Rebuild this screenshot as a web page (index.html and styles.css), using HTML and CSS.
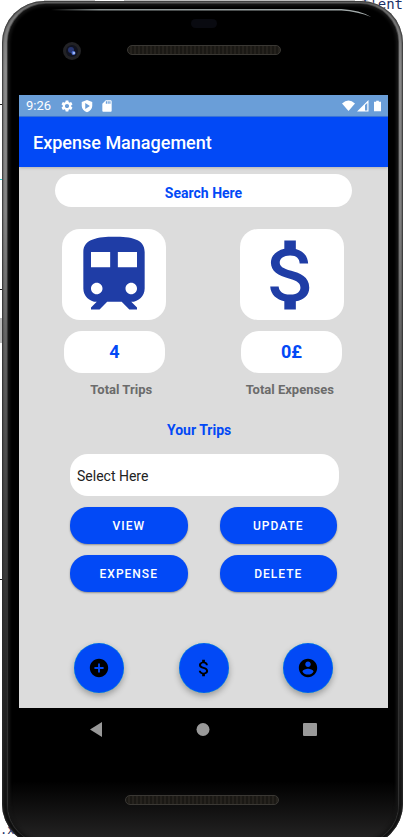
FILE: index.html
```html
<!DOCTYPE html>
<html lang="en">
<head>
<meta charset="utf-8">
<meta name="viewport" content="width=device-width, initial-scale=1">
<title>Expense Management</title>
<link rel="stylesheet" href="styles.css">
</head>
<body>
<div class="backdrop" aria-hidden="true">
  <span class="code code-top">I'ent</span>
  <span class="code code-bottom">.xn</span>
  <span class="rule rule-a"></span>
  <span class="rule rule-b"></span>
  <span class="rule rule-c"></span>
  <span class="rule rule-d"></span>
  <span class="band band-left"></span>
  <span class="band band-tabs"></span>
  <span class="band band-tools"></span>
</div>
<div class="phone">
  <div class="bezel">
    <header class="forehead">
      <svg class="glint" viewBox="0 0 360 14" preserveAspectRatio="none" aria-hidden="true">
        <defs><linearGradient id="glint" x1="0" x2="1" y1="0" y2="0"><stop offset="0" stop-color="#889090" stop-opacity="0"/><stop offset=".15" stop-color="#889090"/><stop offset="1" stop-color="#a4acac"/></linearGradient></defs>
        <path d="M0 2H312Q332 3 344 10Q330 4.500 312 3.500H0z" fill="url(#glint)"/>
      </svg>
      <span class="sensor"></span>
      <svg class="camera" viewBox="0 0 18 18" aria-hidden="true">
        <circle cx="9" cy="9" r="9" fill="#222225"/><circle cx="9" cy="9" r="6" fill="#11131f"/>
        <circle cx="8" cy="8" r="3" fill="#26346f"/><circle cx="10.500" cy="11" r="2" fill="#5375d7"/><circle cx="11" cy="11" r="1" fill="#b6cbff"/>
      </svg>
      <span class="speaker"></span>
    </header>

    <div class="screen">
      <div class="status">
        <span class="time">9:26</span>
        <svg class="status-icon" viewBox="0 0 24 24" aria-hidden="true"><path d="M19.140 12.940c.04-.3.06-.61.06-.94 0-.32-.02-.64-.07-.94l2.030-1.580c.18-.14.23-.41.12-.61l-1.920-3.320c-.12-.22-.37-.29-.59-.22l-2.390.96c-.5-.38-1.030-.7-1.620-.94l-.36-2.540c-.04-.24-.24-.41-.48-.41h-3.840c-.24 0-.43.17-.47.41l-.36 2.540c-.59.24-1.130.57-1.620.94l-2.390-.96c-.22-.08-.47 0-.59.22L2.740 8.870c-.12.21-.08.47.12.61l2.030 1.580c-.05.3-.09.63-.09.94s.02.64.07.94l-2.030 1.580c-.18.14-.23.41-.12.61l1.920 3.320c.12.22.37.29.59.22l2.390-.96c.5.38 1.030.7 1.620.94l.36 2.540c.05.24.24.41.48.41h3.840c.24 0 .44-.17.47-.41l.36-2.540c.59-.24 1.130-.56 1.620-.94l2.390.96c.22.08.47 0 .59-.22l1.920-3.320c.12-.22.07-.47-.12-.61l-2.010-1.580zM12 15.600c-1.980 0-3.600-1.620-3.600-3.600s1.620-3.600 3.600-3.600 3.600 1.620 3.600 3.600-1.620 3.600-3.600 3.600z"/></svg>
        <svg class="status-icon" viewBox="0 0 24 24" aria-hidden="true"><path fill-rule="evenodd" d="M12 1.500 3 5v7c0 5 3.800 9 9 10.500 5.200-1.500 9-5.500 9-10.500V5zM9 7l8 5-8 5z"/></svg>
        <svg class="status-icon" viewBox="0 0 24 24" aria-hidden="true"><path d="M18 2h-8L4 8v12c0 1.100.9 2 2 2h12c1.100 0 2-.9 2-2V4c0-1.100-.9-2-2-2zm-6 6h-2V4h2v4zm3 0h-2V4h2v4zm3 0h-2V4h2v4z"/></svg>
        <span class="signals">
          <svg class="wifi" viewBox="0 0 14 12" aria-hidden="true"><path d="M0 3.200Q7-2.800 14 3.200L7 11.500z"/></svg>
          <svg class="cell" viewBox="0 0 12 12" aria-hidden="true"><path d="M0 11.500 11.500 0V11.500zM8 5v5.500h2.300V3z" fill-rule="evenodd"/></svg>
          <svg class="battery" viewBox="0 0 8 12" aria-hidden="true"><path d="M2.500 0h3v1.200H8V12H0V1.200h2.500z"/></svg>
        </span>
      </div>
      <h1 class="appbar">Expense Management</h1>

      <main class="content">
        <input class="search" type="text" aria-label="Search" placeholder="Search Here">

        <div class="tiles">
          <div class="tile"><svg viewBox="0 0 24 24" aria-hidden="true"><path d="M12 2c-4 0-8 .5-8 4v9.500C4 17.430 5.570 19 7.500 19L6 20.500v.5h2.230l2-2H14l2 2h2v-.5L16.500 19c1.930 0 3.500-1.570 3.500-3.500V6c0-3.500-3.580-4-8-4zM7.500 17c-.83 0-1.500-.67-1.500-1.500S6.670 14 7.500 14s1.500.67 1.500 1.500S8.330 17 7.500 17zm3.500-7H6V6h5v4zm2 0V6h5v4h-5zm3.500 7c-.83 0-1.500-.67-1.500-1.500s.67-1.500 1.500-1.500 1.500.67 1.500 1.500-.67 1.500-1.500 1.500z"/></svg></div>
          <div class="tile"><svg viewBox="0 0 24 24" aria-hidden="true"><path id="dollar" d="M11.800 10.900c-2.270-.59-3-1.200-3-2.150 0-1.090 1.010-1.850 2.700-1.850 1.780 0 2.440.85 2.500 2.100h2.210c-.07-1.720-1.120-3.300-3.210-3.810V3h-3v2.160c-1.940.42-3.500 1.680-3.500 3.610 0 2.310 1.910 3.460 4.700 4.130 2.500.6 3 1.480 3 2.410 0 .69-.49 1.790-2.700 1.790-2.060 0-2.870-.92-2.980-2.100h-2.200c.12 2.190 1.760 3.420 3.680 3.830V21h3v-2.150c1.950-.37 3.500-1.500 3.500-3.550 0-2.840-2.430-3.810-4.700-4.400z"/></svg></div>
        </div>
        <div class="counts"><output class="count">4</output><output class="count">0£</output></div>
        <div class="labels"><span>Total Trips</span><span>Total Expenses</span></div>

        <section class="trips">
          <label class="trips-title" for="trip">Your Trips</label>
          <select class="picker" id="trip"><option>Select Here</option></select>
          <div class="actions">
            <button class="action" type="button">VIEW</button>
            <button class="action" type="button">UPDATE</button>
            <button class="action" type="button">EXPENSE</button>
            <button class="action" type="button">DELETE</button>
          </div>
        </section>

        <div class="fabs">
          <button class="fab" type="button" aria-label="Add trip"><svg viewBox="0 0 24 24" aria-hidden="true"><path d="M12 2C6.480 2 2 6.480 2 12s4.480 10 10 10 10-4.480 10-10S17.520 2 12 2zm5 11h-4v4h-2v-4H7v-2h4V7h2v4h4v2z"/></svg></button>
          <button class="fab" type="button" aria-label="Expenses"><svg viewBox="0 0 24 24" aria-hidden="true"><use href="#dollar"/></svg></button>
          <button class="fab" type="button" aria-label="Account"><svg viewBox="0 0 24 24" aria-hidden="true"><path d="M12 2C6.480 2 2 6.480 2 12s4.480 10 10 10 10-4.480 10-10S17.520 2 12 2zm0 3c1.660 0 3 1.340 3 3s-1.340 3-3 3-3-1.340-3-3 1.340-3 3-3zm0 14.200c-2.500 0-4.710-1.280-6-3.220.03-1.990 4-3.080 6-3.080 1.990 0 5.970 1.090 6 3.080-1.290 1.940-3.500 3.220-6 3.220z"/></svg></button>
        </div>
      </main>
    </div>

    <nav class="navbar" aria-label="System">
      <button class="nav" type="button" aria-label="Back"><svg viewBox="0 0 16 16" aria-hidden="true"><path d="M14 1v15L2 8.500z"/></svg></button>
      <button class="nav" type="button" aria-label="Home"><svg viewBox="0 0 16 16" aria-hidden="true"><circle cx="8" cy="8.500" r="6.500"/></svg></button>
      <button class="nav" type="button" aria-label="Recents"><svg viewBox="0 0 16 16" aria-hidden="true"><rect x="1" y="2" width="14" height="13" rx="1"/></svg></button>
    </nav>
    <footer class="chin"><span class="speaker"></span></footer>
  </div>
</div>
</body>
</html>
```
FILE: styles.css
```css
* {
  box-sizing: border-box;
}

body {
  margin: 0;
  height: 100vh;
  overflow: hidden;
  position: relative;
  background: #fff;
  font-family: Roboto, "Liberation Sans", sans-serif;
}

button,
input,
select {
  font-family: inherit;
  border: 0;
  margin: 0;
}

/* Editor window showing behind the device */
.code {
  position: absolute;
  font: 14px/16px "DejaVu Sans Mono", monospace;
  color: #1b2f66;
}

.code-top {
  top: -4px;
  right: 0;
}

.code-bottom {
  left: 0;
  bottom: -1px;
  font-size: 12px;
}

.rule {
  position: absolute;
  left: 0;
  width: 2px;
  height: 1px;
  background: #222;
}

.rule-a { top: 104px; }
.rule-b { top: 289px; }
.rule-c { top: 579px; }
.rule-d { top: 179px; background: #3cc; }

.band {
  position: absolute;
  background: #bdbdbd;
}

.band-left {
  left: 0;
  top: 318px;
  width: 2px;
  height: 25px;
}

.band-tabs {
  left: 44px;
  top: 0;
  width: 51px;
  height: 4px;
}

.band-tools {
  left: 124px;
  right: 48px;
  top: 0;
  height: 2px;
}

/* Device */
.phone {
  position: relative;
  min-height: calc(100vh + 8px);
  margin: 1px 0 0 2px;
  padding: 3px 5px 3px 6px;
  display: flex;
  border-radius: 42px;
  background: linear-gradient(to bottom, #777 0, #8e8e8e 8%, #858585 25%, #666 40%, #444 60%, #222 85%, #0a0a0a 100%);
  box-shadow: inset 0 0 2px 1px #2a2a2a;
}

.bezel {
  flex: 1;
  min-width: 0;
  display: flex;
  flex-direction: column;
  padding: 0 10px 0 11px;
  border-radius: 38px;
  background: linear-gradient(to bottom, #000 0, #000 calc(100% - 62px), #262525 100%);
  box-shadow: inset 0 0 3px 2px #151515, 0 0 1px 1px #333;
}

.forehead {
  position: relative;
  height: 91px;
  flex: none;
}

.glint {
  position: absolute;
  left: 32px;
  right: 2px;
  top: 3px;
  width: calc(100% - 34px);
  height: 14px;
}

.sensor {
  position: absolute;
  top: 15px;
  left: 50%;
  width: 26px;
  height: 9px;
  margin-left: -13px;
  border-radius: 5px;
  background: #090a10;
}

.camera {
  position: absolute;
  left: 44px;
  top: 38px;
  width: 18px;
  height: 18px;
}

.speaker {
  display: block;
  width: 154px;
  height: 10px;
  margin: 0 auto;
  border: 1px solid #3a3834;
  border-radius: 5px;
  background: repeating-linear-gradient(to right, #1a1814 0, #1a1814 2px, #25221d 2px, #25221d 4px);
}

.forehead .speaker {
  margin-top: 41px;
}

.screen {
  flex: 1;
  display: flex;
  flex-direction: column;
  background: #dcdcdc;
}

.status {
  display: flex;
  align-items: center;
  gap: 6px;
  height: 22px;
  padding: 0 7px;
  background: #6a9ed8;
  border-bottom: 1px solid #3c78de;
  color: #fff;
}

.status svg {
  fill: #fff;
}

.time {
  font-size: 13px;
  line-height: 20px;
  margin-right: 3px;
}

.status-icon {
  width: 14px;
  height: 14px;
}

.signals {
  margin-left: auto;
  display: flex;
  gap: 2px;
}

.wifi {
  width: 13px;
  height: 12px;
}

.cell {
  width: 12px;
  height: 12px;
}

.battery {
  width: 7px;
  height: 12px;
  margin-left: 3px;
}

.appbar {
  position: relative;
  margin: 0;
  padding: 1px 14px 0;
  font-size: 18px;
  font-weight: 500;
  line-height: 49px;
  color: #fff;
  background: #0249f6;
  box-shadow: 0 1px 3px rgba(0, 0, 0, 0.2);
}

.content {
  flex: 1;
  display: flex;
  flex-direction: column;
  padding: 7px 36px 15px;
}

.search {
  width: 100%;
  height: 33px;
  padding: 5px 0 0;
  border-radius: 17px;
  background: #fff;
  text-align: center;
  font-size: 14px;
  font-weight: 700;
  color: #0249f6;
}

.search::placeholder {
  color: #0249f6;
  opacity: 1;
}

.tiles,
.counts {
  display: flex;
  justify-content: space-between;
}

.tiles {
  margin-top: 22px;
  padding: 0 8px 0 7px;
}

.tile {
  display: flex;
  align-items: center;
  justify-content: center;
  width: 104px;
  height: 91px;
  border-radius: 18px;
  background: #fff;
}

.tile svg {
  width: 92px;
  height: 92px;
  fill: #1f3da6;
}

.counts {
  margin-top: 11px;
  padding: 0 10px 0 9px;
}

.count {
  width: 101px;
  border-radius: 18px;
  background: #fff;
  text-align: center;
  font-size: 18px;
  font-weight: 700;
  line-height: 42px;
  color: #0249f6;
}

.labels {
  display: grid;
  grid-template-columns: 1fr 1fr;
  margin-top: 9px;
  margin-left: -18px;
  margin-right: -22px;
  text-align: center;
  font-size: 13px;
  font-weight: 700;
  line-height: 16px;
  color: #6b6b6b;
}

.trips {
  display: flex;
  flex-direction: column;
  margin-top: 22px;
  padding: 0 13px 0 15px;
}

.trips-title {
  width: 96%;
  text-align: center;
  font-size: 14px;
  font-weight: 700;
  line-height: 20px;
  color: #0249f6;
}

.picker {
  appearance: none;
  height: 42px;
  margin-top: 14px;
  padding: 1px 7px 0;
  border-radius: 18px;
  background: #fff;
  font-size: 14px;
  color: #222;
}

.actions {
  display: grid;
  grid-template-columns: 1fr 1fr;
  gap: 11px 32px;
  margin-top: 11px;
  padding-right: 2px;
}

.action {
  height: 37px;
  padding: 0;
  border-radius: 18px;
  background: #0249f6;
  box-shadow: 0 1px 2px rgba(0, 0, 0, 0.35);
  font-size: 12px;
  font-weight: 500;
  letter-spacing: 1px;
  color: #fff;
}

.fabs {
  display: flex;
  justify-content: space-between;
  margin-top: auto;
  padding: 0 19px;
}

.fab {
  display: flex;
  align-items: center;
  justify-content: center;
  width: 50px;
  height: 50px;
  padding: 0;
  border-radius: 50%;
  background: #0249f6;
  box-shadow: inset 0 0 1px #03dac5, 0 3px 6px rgba(0, 0, 0, 0.3);
}

.fab svg {
  width: 22px;
  height: 22px;
}

.navbar {
  display: flex;
  justify-content: space-between;
  padding: 13px 70px 14px 69px;
}

.nav {
  display: flex;
  padding: 0;
  background: none;
}

.nav svg {
  width: 16px;
  height: 16px;
  fill: #999;
}

.chin {
  height: 92px;
  flex: none;
  padding: 44px 4px 0 0;
}
```
